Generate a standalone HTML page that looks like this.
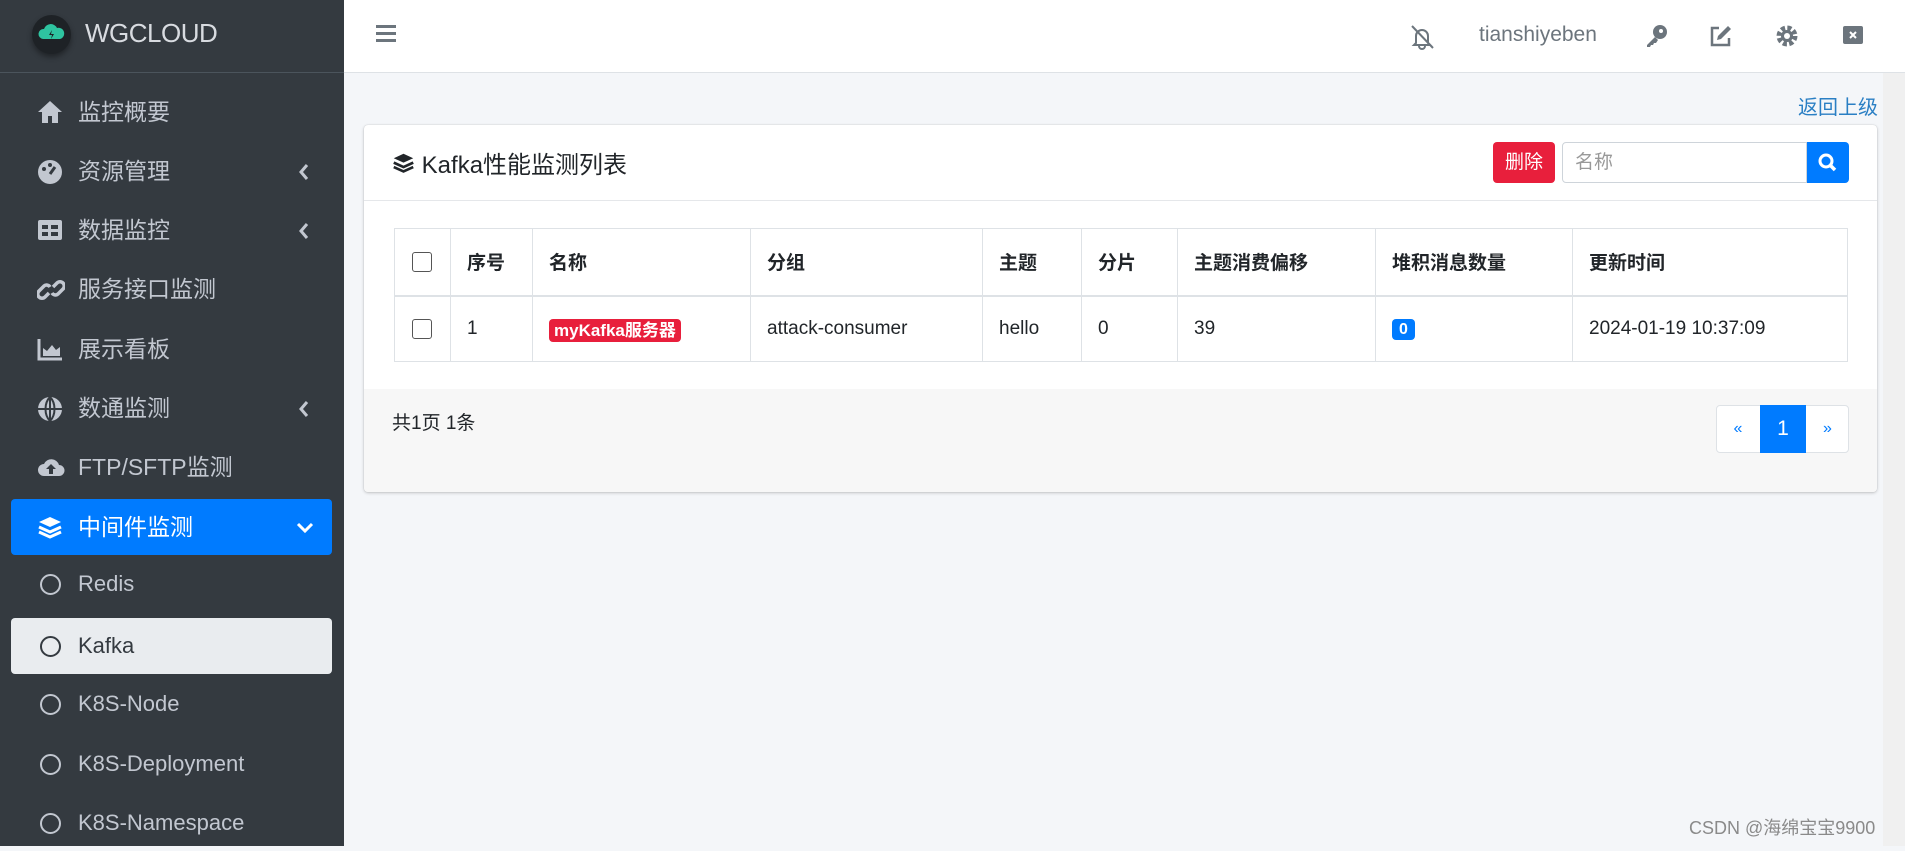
<!DOCTYPE html>
<html><head><meta charset="utf-8"><style>
*{box-sizing:border-box;margin:0;padding:0}
body{width:1905px;height:846px;overflow:hidden;background:#f4f6f9;font-family:"Liberation Sans","Noto Sans CJK SC",sans-serif;position:relative;color:#212529}
.a{position:absolute}
#side{left:0;top:0;width:344px;height:846px;background:#343a40}
.mi{position:absolute;left:11px;width:321px;height:56px;color:#c2c7d0;font-size:23px;line-height:56px;padding-left:67px}
.mi svg{position:absolute;left:26px;top:16px}
.mi svg.ch{left:auto;right:22px;top:20px}
.circ{position:absolute;left:29px;top:18px;width:21px;height:21px;border:2.5px solid #c2c7d0;border-radius:50%}
#hdr{left:344px;top:0;width:1561px;height:73px;background:#fff;border-bottom:1px solid #dee2e6}
.hi{position:absolute;top:24px;color:#6c757d}
#card{left:364px;top:125px;width:1513px;height:367px;background:#fff;border-radius:4px;box-shadow:0 0 1px rgba(0,0,0,.2),0 1px 3px rgba(0,0,0,.2)}
table{position:absolute;left:30px;top:103px;width:1454px;border-collapse:collapse;font-size:19px}
td,th{border:1px solid #dee2e6;text-align:left;padding:0 16px;height:66px}
th{height:67px;border-bottom:2px solid #dee2e6;font-weight:bold}
.cb{display:inline-block;width:20px;height:20px;border:1.5px solid #555;border-radius:3px;vertical-align:middle}
</style></head><body>
<div id="side" class="a">
 <div class="a" style="left:32px;top:15px;width:39px;height:39px;border-radius:50%;background:#1e2226;box-shadow:0 3px 6px rgba(0,0,0,.4)"><svg width="39" height="39" viewBox="0 0 39 39"><path d="M11 24a5 5 0 0 1 1-10 7 7 0 0 1 13-1 5 5 0 0 1 3 11z" fill="#2ec4a0"/><path d="M20 15l-3 5h3l-1 4 3-5h-3z" fill="#1e2226"/></svg></div>
 <div class="a" style="left:85px;top:18px;color:#d8dbe0;font-size:26px;letter-spacing:-0.5px">WGCLOUD</div>
 <div class="a" style="left:0;top:72px;width:344px;height:1px;background:#4b545c"></div>
 <div class="mi" style="top:84px"><svg width="26" height="24" viewBox="0 0 26 24"><path d="M13 1L1 12h4v11h6v-7h4v7h6V12h4z" fill="#c2c7d0"/></svg>监控概要</div>
 <div class="mi" style="top:143px"><svg width="26" height="26" viewBox="0 0 26 26"><circle cx="13" cy="13" r="12" fill="#c2c7d0"/><path d="M13 15l5-7" stroke="#343a40" stroke-width="3"/><circle cx="7" cy="10" r="2" fill="#343a40"/><circle cx="13" cy="6" r="2" fill="#343a40"/></svg>资源管理<svg class="ch" width="12" height="18" viewBox="0 0 12 18"><path d="M9 2L3 9l6 7" stroke="#c2c7d0" stroke-width="3" fill="none"/></svg></div>
 <div class="mi" style="top:202px"><svg width="26" height="24" viewBox="0 0 26 24"><rect x="1" y="2" width="24" height="20" rx="2" fill="#c2c7d0"/><rect x="5" y="7" width="6" height="4" fill="#343a40"/><rect x="14" y="7" width="7" height="4" fill="#343a40"/><rect x="5" y="14" width="6" height="4" fill="#343a40"/><rect x="14" y="14" width="7" height="4" fill="#343a40"/></svg>数据监控<svg class="ch" width="12" height="18" viewBox="0 0 12 18"><path d="M9 2L3 9l6 7" stroke="#c2c7d0" stroke-width="3" fill="none"/></svg></div>
 <div class="mi" style="top:261px"><svg width="28" height="26" viewBox="0 0 28 26"><path d="M12 16l-4 4a4 4 0 0 1-6-6l5-5a4 4 0 0 1 6 1M16 10l4-4a4 4 0 0 1 6 6l-5 5a4 4 0 0 1-6-1" stroke="#c2c7d0" stroke-width="3.5" fill="none"/></svg>服务接口监测</div>
 <div class="mi" style="top:321px"><svg width="26" height="24" viewBox="0 0 26 24"><path d="M2 2v20h23" stroke="#c2c7d0" stroke-width="3" fill="none"/><path d="M6 19v-8l4 3 5-6 4 5 4-3v9z" fill="#c2c7d0"/></svg>展示看板</div>
 <div class="mi" style="top:380px"><svg width="26" height="26" viewBox="0 0 26 26"><circle cx="13" cy="13" r="12" fill="#c2c7d0"/><path d="M1 13h24M13 1v24M13 1c-6 6-6 18 0 24M13 1c6 6 6 18 0 24" stroke="#343a40" stroke-width="2" fill="none"/></svg>数通监测<svg class="ch" width="12" height="18" viewBox="0 0 12 18"><path d="M9 2L3 9l6 7" stroke="#c2c7d0" stroke-width="3" fill="none"/></svg></div>
 <div class="mi" style="top:439px"><svg width="28" height="24" viewBox="0 0 28 24"><path d="M7 21a6 6 0 0 1 0-12 8 8 0 0 1 15 1 5.5 5.5 0 0 1 0 11z" fill="#c2c7d0"/><path d="M14 9l-5 5h3v5h4v-5h3z" fill="#343a40"/></svg>FTP/SFTP监测</div>
 <div class="mi" style="top:499px;background:#007bff;color:#fff;border-radius:4px"><svg width="26" height="26" viewBox="0 0 26 26"><path d="M13 2l11 5-11 5L2 7z" fill="#fff"/><path d="M2 12l11 5 11-5M2 17l11 5 11-5" stroke="#fff" stroke-width="3" fill="none"/></svg>中间件监测<svg class="ch" width="18" height="14" viewBox="0 0 18 14" style="top:22px;right:18px"><path d="M2 3l7 7 7-7" stroke="#fff" stroke-width="3" fill="none"/></svg></div>
 <div class="mi" style="top:556px;font-size:22px"><span class="circ"></span>Redis</div>
 <div class="mi" style="top:618px;background:#e9ecef;color:#343a40;border-radius:4px;font-size:22px"><span class="circ" style="border-color:#343a40"></span>Kafka</div>
 <div class="mi" style="top:676px;font-size:22px"><span class="circ"></span>K8S-Node</div>
 <div class="mi" style="top:736px;font-size:22px"><span class="circ"></span>K8S-Deployment</div>
 <div class="mi" style="top:795px;font-size:22px"><span class="circ"></span>K8S-Namespace</div>
</div>
<div id="hdr" class="a">
 <div class="a" style="left:32px;top:25px;width:20px;height:3px;background:#6c757d;box-shadow:0 7px 0 #6c757d,0 14px 0 #6c757d"></div>
 <svg class="hi" style="left:1064px" width="28" height="26" viewBox="0 0 28 26"><path d="M8 19V12a6 6 0 0 1 12 0v7l2 2H6z M11 22a3 3 0 0 0 6 0" stroke="#6c757d" stroke-width="2" fill="none"/><path d="M4 2l21 22" stroke="#6c757d" stroke-width="2"/></svg>
 <div class="a" style="left:1135px;top:23px;font-size:21px;color:#6c757d">tianshiyeben</div>
 <svg class="hi" style="left:1300px" width="24" height="24" viewBox="0 0 24 24"><circle cx="16" cy="8" r="7" fill="#6c757d"/><circle cx="17" cy="7" r="2" fill="#fff"/><path d="M11 13l-8 8v2h3l1-2h2l1-2h2l2-3" fill="#6c757d"/></svg>
 <svg class="hi" style="left:1365px" width="24" height="24" viewBox="0 0 24 24"><path d="M10 4H3v17h17v-7" stroke="#6c757d" stroke-width="2.5" fill="none"/><path d="M19 2l3 3-10 10-4 1 1-4z" fill="#6c757d"/></svg>
 <svg class="hi" style="left:1431px" width="24" height="24" viewBox="0 0 24 24"><circle cx="12" cy="12" r="8" fill="none" stroke="#6c757d" stroke-width="5" stroke-dasharray="4 2.3"/><circle cx="12" cy="12" r="6" fill="#6c757d"/><circle cx="12" cy="12" r="3" fill="#fff"/></svg>
 <svg class="hi" style="left:1498px" width="22" height="22" viewBox="0 0 22 22"><rect x="1" y="2" width="20" height="18" rx="2" fill="#6c757d"/><path d="M8 8l6 6M14 8l-6 6" stroke="#fff" stroke-width="2"/></svg>
</div>
<div class="a" style="left:1798px;top:91px;font-size:20px;color:#2a7fc4">返回上级</div>
<div id="card" class="a">
 <div class="a" style="left:28px;top:20px;font-size:24px;color:#212529"><svg width="23" height="23" viewBox="0 0 26 26" style="vertical-align:-2px"><path d="M13 2l11 5-11 5L2 7z" fill="#212529"/><path d="M2 12l11 5 11-5M2 17l11 5 11-5" stroke="#212529" stroke-width="3" fill="none"/></svg> Kafka性能监测列表</div>
 <div class="a" style="left:1129px;top:17px;width:62px;height:41px;background:#e81f3c;color:#fff;border-radius:4px;font-size:19px;line-height:41px;text-align:center">删除</div>
 <div class="a" style="left:1198px;top:17px;width:245px;height:41px;border:1px solid #ced4da;border-radius:4px 0 0 4px;font-size:19px;line-height:39px;padding-left:12px;color:#999">名称</div>
 <div class="a" style="left:1443px;top:17px;width:42px;height:41px;background:#007bff;border-radius:0 4px 4px 0"><svg width="42" height="41" viewBox="0 0 42 41"><circle cx="19" cy="19" r="6" stroke="#fff" stroke-width="3" fill="none"/><path d="M23 23l5 5" stroke="#fff" stroke-width="3.5"/></svg></div>
 <div class="a" style="left:0;top:75px;width:1513px;height:1px;background:#e5e7ea"></div>
 <table>
  <tr><th style="width:56px;padding:0 17px"><span class="cb"></span></th><th style="width:82px">序号</th><th style="width:218px">名称</th><th style="width:232px">分组</th><th style="width:99px">主题</th><th style="width:96px">分片</th><th style="width:198px">主题消费偏移</th><th style="width:197px">堆积消息数量</th><th>更新时间</th></tr>
  <tr><td style="padding:0 17px"><span class="cb"></span></td><td>1</td><td><span style="background:#e81f3c;color:#fff;font-weight:bold;font-size:17px;padding:2px 5px;border-radius:4px">myKafka服务器</span></td><td>attack-consumer</td><td>hello</td><td>0</td><td>39</td><td><span style="background:#007bff;color:#fff;font-weight:bold;font-size:16px;padding:2px 7px;border-radius:4px">0</span></td><td>2024-01-19 10:37:09</td></tr>
 </table>
 <div class="a" style="left:0;top:264px;width:1513px;height:103px;background:#f7f7f7;border-radius:0 0 4px 4px"></div>
 <div class="a" style="left:28px;top:283px;font-size:19px">共1页 1条</div>
 <div class="a" style="left:1352px;top:280px;width:133px;height:48px;background:#fff;border:1px solid #dee2e6;border-radius:4px"></div>
 <div class="a" style="left:1352px;top:280px;width:44px;height:48px;line-height:48px;text-align:center;color:#007bff;font-size:16px">«</div>
 <div class="a" style="left:1396px;top:280px;width:46px;height:48px;line-height:48px;text-align:center;background:#007bff;color:#fff;font-size:21px">1</div>
 <div class="a" style="left:1442px;top:280px;width:43px;height:48px;line-height:48px;text-align:center;color:#007bff;font-size:16px">»</div>
</div>
<div class="a" style="left:1883px;top:73px;width:22px;height:773px;background:#f0f0f0"></div>
<div class="a" style="left:1689px;top:814px;font-size:18px;color:#8a8a8a">CSDN @海绵宝宝9900</div>
</body></html>
